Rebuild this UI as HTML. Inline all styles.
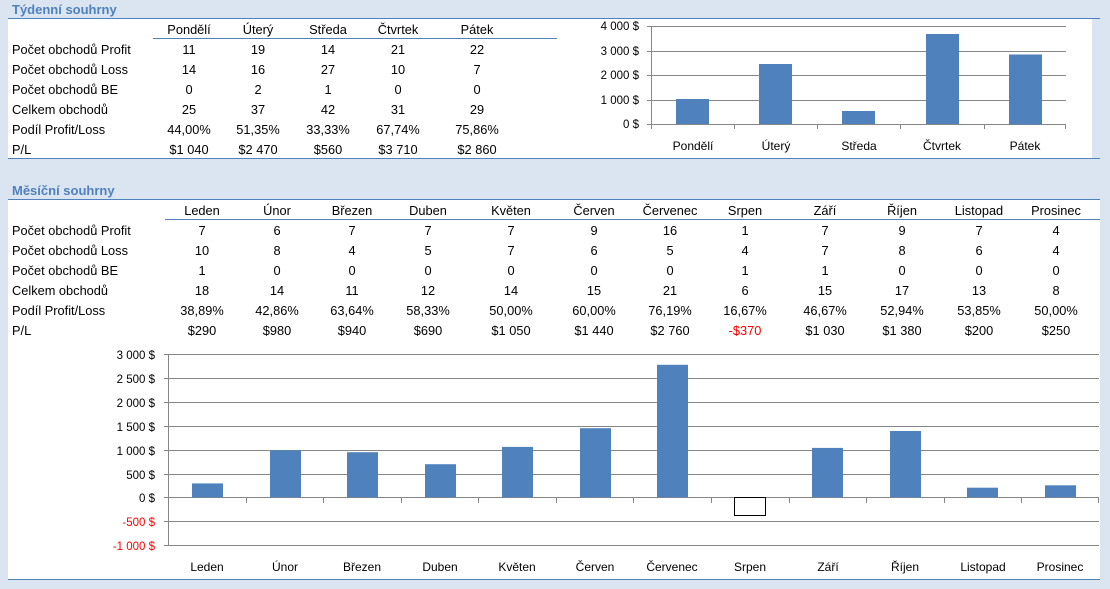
<!DOCTYPE html>
<html><head><meta charset="utf-8"><style>
html,body{margin:0;padding:0;background:#dbe5f1;}
svg{display:block;font-family:"Liberation Sans",sans-serif;}
.t{font-size:12.8px;fill:#000;}
.c{text-anchor:middle}
.h{font-size:13px;font-weight:bold;fill:#4f81bd}
.ax{font-size:11.5px;fill:#000;text-anchor:end}
.cat{font-size:12px;fill:#000;text-anchor:middle}
</style></head><body>
<svg width="1110" height="589" viewBox="0 0 1110 589">
<rect width="1110" height="589" fill="#dbe5f1"/>
<!-- weekly -->
<text x="12" y="14" class="h">Týdenní souhrny</text>
<rect x="8" y="19" width="1084" height="139" fill="#fff"/>
<line x1="8" y1="18.5" x2="1100" y2="18.5" stroke="#4f81bd"/>
<line x1="8" y1="158.5" x2="1100" y2="158.5" stroke="#4f81bd"/>
<line x1="153" y1="38.5" x2="557" y2="38.5" stroke="#4f81bd"/>
<g class="t">
<text x="189" y="34" class="c">Pondělí</text><text x="258" y="34" class="c">Úterý</text><text x="328" y="34" class="c">Středa</text><text x="398" y="34" class="c">Čtvrtek</text><text x="477" y="34" class="c">Pátek</text>
<text x="12" y="54">Počet obchodů Profit</text><text x="189" y="54" class="c">11</text><text x="258" y="54" class="c">19</text><text x="328" y="54" class="c">14</text><text x="398" y="54" class="c">21</text><text x="477" y="54" class="c">22</text>
<text x="12" y="74">Počet obchodů Loss</text><text x="189" y="74" class="c">14</text><text x="258" y="74" class="c">16</text><text x="328" y="74" class="c">27</text><text x="398" y="74" class="c">10</text><text x="477" y="74" class="c">7</text>
<text x="12" y="94">Počet obchodů BE</text><text x="189" y="94" class="c">0</text><text x="258" y="94" class="c">2</text><text x="328" y="94" class="c">1</text><text x="398" y="94" class="c">0</text><text x="477" y="94" class="c">0</text>
<text x="12" y="114">Celkem obchodů</text><text x="189" y="114" class="c">25</text><text x="258" y="114" class="c">37</text><text x="328" y="114" class="c">42</text><text x="398" y="114" class="c">31</text><text x="477" y="114" class="c">29</text>
<text x="12" y="134">Podíl Profit/Loss</text><text x="189" y="134" class="c">44,00%</text><text x="258" y="134" class="c">51,35%</text><text x="328" y="134" class="c">33,33%</text><text x="398" y="134" class="c">67,74%</text><text x="477" y="134" class="c">75,86%</text>
<text x="12" y="154">P/L</text><text x="189" y="154" class="c">$1 040</text><text x="258" y="154" class="c">$2 470</text><text x="328" y="154" class="c">$560</text><text x="398" y="154" class="c">$3 710</text><text x="477" y="154" class="c">$2 860</text>
</g>
<g stroke="#868686" stroke-width="1">
<line x1="647" y1="26.5" x2="1066" y2="26.5"/><line x1="647" y1="51.5" x2="1066" y2="51.5"/><line x1="647" y1="75.5" x2="1066" y2="75.5"/><line x1="647" y1="100.5" x2="1066" y2="100.5"/><line x1="647" y1="124.5" x2="1066" y2="124.5"/>
<line x1="651.5" y1="26" x2="651.5" y2="129"/>
<line x1="734.5" y1="124" x2="734.5" y2="129"/><line x1="817.5" y1="124" x2="817.5" y2="129"/><line x1="900.5" y1="124" x2="900.5" y2="129"/><line x1="984.5" y1="124" x2="984.5" y2="129"/><line x1="1065.5" y1="124" x2="1065.5" y2="129"/>
</g>
<g fill="#4f81bd">
<rect x="676" y="99" width="33" height="25"/>
<rect x="759" y="64" width="33" height="60"/>
<rect x="842" y="111" width="33" height="13"/>
<rect x="926" y="34" width="33" height="90"/>
<rect x="1009" y="54.5" width="33" height="70"/>
</g>
<g class="ax">
<text x="639" y="30">4 000 $</text><text x="639" y="55">3 000 $</text><text x="639" y="79">2 000 $</text><text x="639" y="104">1 000 $</text><text x="639" y="128">0 $</text>
</g>
<g class="cat">
<text x="693" y="150">Pondělí</text><text x="776" y="150">Úterý</text><text x="859" y="150">Středa</text><text x="942" y="150">Čtvrtek</text><text x="1025" y="150">Pátek</text>
</g>

<!-- monthly -->
<text x="12" y="195" class="h">Měsíční souhrny</text>
<rect x="8" y="200" width="1092" height="379" fill="#fff"/>
<line x1="8" y1="199.5" x2="1100" y2="199.5" stroke="#4f81bd"/>
<line x1="8" y1="579.5" x2="1100" y2="579.5" stroke="#4f81bd"/>
<line x1="165" y1="219.5" x2="1100" y2="219.5" stroke="#4f81bd"/>
<g class="t">
<text x="202" y="215" class="c">Leden</text><text x="277" y="215" class="c">Únor</text><text x="352" y="215" class="c">Březen</text><text x="428" y="215" class="c">Duben</text><text x="511" y="215" class="c">Květen</text><text x="594" y="215" class="c">Červen</text><text x="670" y="215" class="c">Červenec</text><text x="745" y="215" class="c">Srpen</text><text x="825" y="215" class="c">Září</text><text x="902" y="215" class="c">Říjen</text><text x="979" y="215" class="c">Listopad</text><text x="1056" y="215" class="c">Prosinec</text>
<text x="12" y="235">Počet obchodů Profit</text><text x="202" y="235" class="c">7</text><text x="277" y="235" class="c">6</text><text x="352" y="235" class="c">7</text><text x="428" y="235" class="c">7</text><text x="511" y="235" class="c">7</text><text x="594" y="235" class="c">9</text><text x="670" y="235" class="c">16</text><text x="745" y="235" class="c">1</text><text x="825" y="235" class="c">7</text><text x="902" y="235" class="c">9</text><text x="979" y="235" class="c">7</text><text x="1056" y="235" class="c">4</text>
<text x="12" y="255">Počet obchodů Loss</text><text x="202" y="255" class="c">10</text><text x="277" y="255" class="c">8</text><text x="352" y="255" class="c">4</text><text x="428" y="255" class="c">5</text><text x="511" y="255" class="c">7</text><text x="594" y="255" class="c">6</text><text x="670" y="255" class="c">5</text><text x="745" y="255" class="c">4</text><text x="825" y="255" class="c">7</text><text x="902" y="255" class="c">8</text><text x="979" y="255" class="c">6</text><text x="1056" y="255" class="c">4</text>
<text x="12" y="275">Počet obchodů BE</text><text x="202" y="275" class="c">1</text><text x="277" y="275" class="c">0</text><text x="352" y="275" class="c">0</text><text x="428" y="275" class="c">0</text><text x="511" y="275" class="c">0</text><text x="594" y="275" class="c">0</text><text x="670" y="275" class="c">0</text><text x="745" y="275" class="c">1</text><text x="825" y="275" class="c">1</text><text x="902" y="275" class="c">0</text><text x="979" y="275" class="c">0</text><text x="1056" y="275" class="c">0</text>
<text x="12" y="295">Celkem obchodů</text><text x="202" y="295" class="c">18</text><text x="277" y="295" class="c">14</text><text x="352" y="295" class="c">11</text><text x="428" y="295" class="c">12</text><text x="511" y="295" class="c">14</text><text x="594" y="295" class="c">15</text><text x="670" y="295" class="c">21</text><text x="745" y="295" class="c">6</text><text x="825" y="295" class="c">15</text><text x="902" y="295" class="c">17</text><text x="979" y="295" class="c">13</text><text x="1056" y="295" class="c">8</text>
<text x="12" y="315">Podíl Profit/Loss</text><text x="202" y="315" class="c">38,89%</text><text x="277" y="315" class="c">42,86%</text><text x="352" y="315" class="c">63,64%</text><text x="428" y="315" class="c">58,33%</text><text x="511" y="315" class="c">50,00%</text><text x="594" y="315" class="c">60,00%</text><text x="670" y="315" class="c">76,19%</text><text x="745" y="315" class="c">16,67%</text><text x="825" y="315" class="c">46,67%</text><text x="902" y="315" class="c">52,94%</text><text x="979" y="315" class="c">53,85%</text><text x="1056" y="315" class="c">50,00%</text>
<text x="12" y="335">P/L</text><text x="202" y="335" class="c">$290</text><text x="277" y="335" class="c">$980</text><text x="352" y="335" class="c">$940</text><text x="428" y="335" class="c">$690</text><text x="511" y="335" class="c">$1 050</text><text x="594" y="335" class="c">$1 440</text><text x="670" y="335" class="c">$2 760</text><text x="745" y="335" class="c" style="fill:#f00">-$370</text><text x="825" y="335" class="c">$1 030</text><text x="902" y="335" class="c">$1 380</text><text x="979" y="335" class="c">$200</text><text x="1056" y="335" class="c">$250</text>
</g>
<g stroke="#868686" stroke-width="1">
<line x1="164" y1="354.5" x2="1099" y2="354.5"/><line x1="164" y1="378.5" x2="1099" y2="378.5"/><line x1="164" y1="402.5" x2="1099" y2="402.5"/><line x1="164" y1="426.5" x2="1099" y2="426.5"/><line x1="164" y1="450.5" x2="1099" y2="450.5"/><line x1="164" y1="474.5" x2="1099" y2="474.5"/><line x1="164" y1="497.5" x2="1099" y2="497.5"/><line x1="164" y1="521.5" x2="1099" y2="521.5"/><line x1="164" y1="545.5" x2="1099" y2="545.5"/>
<line x1="168.5" y1="354" x2="168.5" y2="546"/>
<line x1="246.5" y1="497" x2="246.5" y2="503"/><line x1="323.5" y1="497" x2="323.5" y2="503"/><line x1="401.5" y1="497" x2="401.5" y2="503"/><line x1="478.5" y1="497" x2="478.5" y2="503"/><line x1="556.5" y1="497" x2="556.5" y2="503"/><line x1="633.5" y1="497" x2="633.5" y2="503"/><line x1="711.5" y1="497" x2="711.5" y2="503"/><line x1="789.5" y1="497" x2="789.5" y2="503"/><line x1="866.5" y1="497" x2="866.5" y2="503"/><line x1="944.5" y1="497" x2="944.5" y2="503"/><line x1="1021.5" y1="497" x2="1021.5" y2="503"/><line x1="1098.5" y1="497" x2="1098.5" y2="503"/>
</g>
<g fill="#4f81bd">
<rect x="192" y="483.4" width="31" height="14"/>
<rect x="270" y="450.3" width="31" height="47"/>
<rect x="347" y="452.2" width="31" height="45"/>
<rect x="425" y="464.2" width="31" height="33"/>
<rect x="502" y="446.9" width="31" height="50.4"/>
<rect x="580" y="428.2" width="31" height="69.1"/>
<rect x="657" y="364.8" width="31" height="132.5"/>
<rect x="812" y="447.9" width="31" height="49.4"/>
<rect x="890" y="431" width="31" height="66.3"/>
<rect x="967" y="487.7" width="31" height="9.6"/>
<rect x="1045" y="485.3" width="31" height="12"/>
</g>
<rect x="734.5" y="497.5" width="31" height="18" fill="#fff" stroke="#000" stroke-width="1"/>
<g class="ax">
<text x="155" y="359">3 000 $</text><text x="155" y="383">2 500 $</text><text x="155" y="407">2 000 $</text><text x="155" y="431">1 500 $</text><text x="155" y="455">1 000 $</text><text x="155" y="479">500 $</text><text x="155" y="502">0 $</text>
<text x="155" y="526" style="fill:#f00">-500 $</text><text x="155" y="550" style="fill:#f00">-1 000 $</text>
</g>
<g class="cat">
<text x="207" y="571">Leden</text><text x="285" y="571">Únor</text><text x="362" y="571">Březen</text><text x="440" y="571">Duben</text><text x="517" y="571">Květen</text><text x="595" y="571">Červen</text><text x="672" y="571">Červenec</text><text x="750" y="571">Srpen</text><text x="828" y="571">Září</text><text x="905" y="571">Říjen</text><text x="983" y="571">Listopad</text><text x="1060" y="571">Prosinec</text>
</g>
</svg>
</body></html>
